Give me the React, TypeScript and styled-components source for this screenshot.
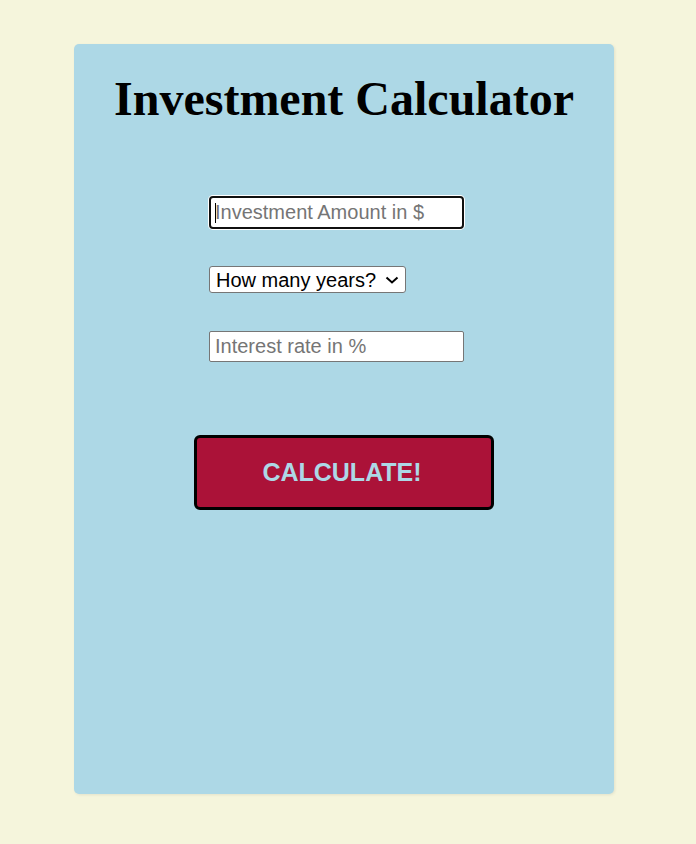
import React from 'react'
import styled, { createGlobalStyle } from 'styled-components'

const GlobalStyle = createGlobalStyle`
  html, body {
    margin: 0;
    padding: 0;
    background: #f5f5dc;
  }
`

const Page = styled.div`
  min-height: 844px;
  padding: 44px 0 0 74px;
  box-sizing: border-box;
`

const Card = styled.main`
  width: 540px;
  height: 750px;
  box-sizing: border-box;
  background: #add8e6;
  border-radius: 5px;
  box-shadow: 1px 1px 3px rgba(0, 0, 0, 0.08);
  display: flex;
  flex-direction: column;
  align-items: center;
  padding-top: 26px;
`

const Title = styled.h1`
  margin: 0;
  font-family: 'Liberation Serif', 'Times New Roman', serif;
  font-weight: bold;
  font-size: 48px;
  line-height: 58px;
  color: #000;
`

const Form = styled.form`
  width: 270px;
  margin-top: 68px;
  display: flex;
  flex-direction: column;
  align-items: flex-start;
`

const Field = styled.div<{ $gap?: number }>`
  position: relative;
  margin-top: ${p => p.$gap ?? 0}px;
  display: flex;
`

const Input = styled.input<{ $focused?: boolean }>`
  width: 255px;
  height: 31px;
  box-sizing: border-box;
  padding: 1px 5px;
  font-family: 'Liberation Sans', Arial, sans-serif;
  font-size: 20px;
  color: #000;
  background: #fff;
  border: 1px solid #767676;
  border-radius: 2px;
  outline: none;

  &::placeholder {
    color: #757575;
  }

  ${p => p.$focused && `
    height: 33px;
    border: 2px solid #101010;
    border-radius: 4px;
    padding: 1px 4px;
    box-shadow: 0 0 0 1px #fff;
  `}
`

const Caret = styled.span`
  position: absolute;
  left: 6px;
  top: 7px;
  width: 1px;
  height: 20px;
  background: #000;
`

const Select = styled.select`
  appearance: none;
  width: 197px;
  height: 27px;
  box-sizing: border-box;
  padding: 0 26px 0 6px;
  font-family: 'Liberation Sans', Arial, sans-serif;
  font-size: 20px;
  color: #000;
  background: #fff;
  border: 1px solid #767676;
  border-radius: 3px;
`

const Chevron = styled.svg`
  position: absolute;
  right: 7px;
  top: 10px;
  width: 14px;
  height: 8px;
  pointer-events: none;
`

const Button = styled.button`
  margin-top: 73px;
  width: 300px;
  height: 75px;
  box-sizing: border-box;
  background: #ab1238;
  border: 3px solid #000;
  border-radius: 6px;
  color: #add8e6;
  font-family: 'Liberation Sans', Arial, sans-serif;
  font-weight: bold;
  font-size: 25px;
  padding: 0 4px 0 0;
  cursor: pointer;
`

export default function App() {
  return (
    <Page>
      <GlobalStyle />
      <Card>
        <Title>Investment Calculator</Title>
        <Form onSubmit={e => e.preventDefault()}>
          <Field>
            <Input $focused type="text" placeholder="Investment Amount in $" />
            <Caret />
          </Field>
          <Field $gap={37}>
            <Select defaultValue="">
              <option value="" disabled>How many years?</option>
              <option value="1">1</option>
              <option value="5">5</option>
              <option value="10">10</option>
              <option value="20">20</option>
            </Select>
            <Chevron viewBox="0 0 14 8">
              <path d="M1.5 1.5 L7 6.5 L12.5 1.5" fill="none" stroke="#000" strokeWidth="2" />
            </Chevron>
          </Field>
          <Field $gap={38}>
            <Input type="text" placeholder="Interest rate in %" />
          </Field>
        </Form>
        <Button type="button">CALCULATE!</Button>
      </Card>
    </Page>
  )
}
